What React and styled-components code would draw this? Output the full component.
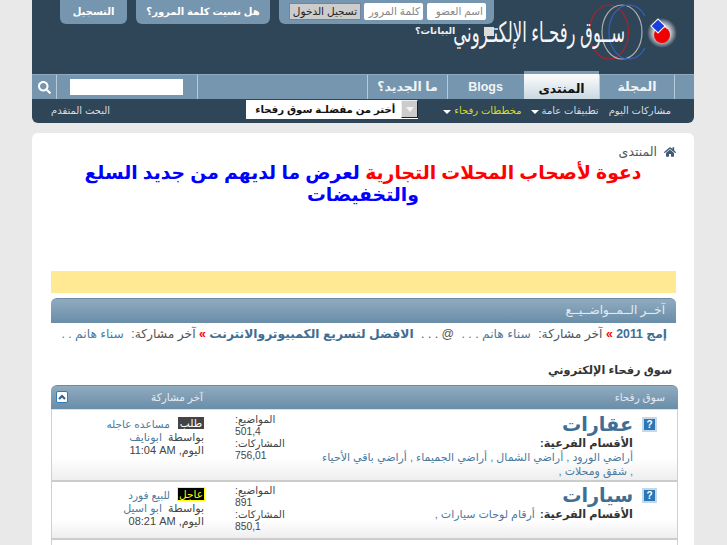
import React from 'react';
import styled, { createGlobalStyle } from 'styled-components';
import { FaHome, FaSearch } from 'react-icons/fa';

const Global = createGlobalStyle`
  html, body { margin: 0; padding: 0; height: 545px; overflow: hidden; background: #e9e9e9; }
  body { font-family: "Liberation Sans", "DejaVu Sans", sans-serif; font-size: 12px; color: #3e3e3e; direction: rtl; }
  * { box-sizing: border-box; }
`;

const Page = styled.div`
  width: 662px;
  margin-right: 33px;
  position: relative;
`;
const Header = styled.header`
  position: relative;
  height: 123px;
  background: #2f4558;
  border-radius: 0 0 6px 6px;
  overflow: hidden;
`;
const TopRow = styled.div`
  height: 74px;
  padding-right: 200px;
  display: flex;
  align-items: flex-start;
`;
const LoginPanel = styled.div`
  width: 215px;
  height: 24px;
  background: #7596ae;
  border-radius: 0 0 6px 6px;
  display: flex;
  align-items: flex-start;
  gap: 4px;
  padding: 3px 8px 0 0;
`;
const LoginField = styled.div`
  width: 59px;
  height: 17px;
  background: #fff;
  border-radius: 2px;
  color: #888;
  font-size: 10.5px;
  line-height: 17px;
  padding-right: 3px;
  white-space: nowrap;
  overflow: hidden;
`;
const LoginButton = styled.div`
  width: 72px;
  height: 17px;
  margin-right: -1px;
  background: #ccc;
  border: 1px solid #6d86a8;
  color: #222;
  font-size: 10.5px;
  line-height: 14px;
  text-align: center;
  white-space: nowrap;
`;
const TopLink = styled.a`
  width: ${p => p.$w}px;
  height: 24px;
  margin-right: ${p => p.$gap}px;
  background: #7596ae;
  border-radius: 0 0 6px 6px;
  color: #fff;
  font-weight: bold;
  font-size: 10px;
  line-height: 24px;
  text-align: center;
  white-space: nowrap;
`;
const Logo = styled.div`
  position: absolute;
  left: 382px;
  top: 0;
  width: 270px;
  height: 60px;
`;
const LogoArt = styled.svg`
  position: absolute;
  inset: 0;
`;
const LogoName = styled.div`
  position: absolute;
  right: 59px;
  top: 15px;
  color: #f6f6f6;
  font-size: 28px;
  line-height: 36px;
  white-space: nowrap;
  transform: scaleX(.59);
  transform-origin: right center;
`;
const LogoDot = styled.i`
  position: absolute;
  left: 70px;
  top: 27px;
  width: 10px;
  height: 9px;
  background: #dcdcdc;
`;
const ForgotNote = styled.div`
  position: absolute;
  left: 1px;
  top: 24px;
  color: #eee;
  font-size: 9.5px;
  font-weight: bold;
  line-height: 14px;
  white-space: nowrap;
`;
const TabBar = styled.nav`
  height: 25px;
  background: #7596ae;
  border-top: 1px solid #8eaabf;
  display: flex;
  padding-right: 19px;
  position: relative;
`;
const Tab = styled.a`
  width: ${p => p.$w}px;
  height: 24px;
  border-left: 1px solid #b7cad8;
  border-right: ${p => p.$first ? '1px solid #b7cad8' : 'none'};
  color: #f0f4f7;
  font-weight: bold;
  font-size: 12.5px;
  line-height: 24px;
  text-align: center;
  white-space: nowrap;
`;
const ActiveTab = styled(Tab)`
  height: 28px;
  margin-top: -4px;
  padding-top: 3px;
  background: linear-gradient(#f6f8f9 15%, #c9d8e1);
  border-top: 3px solid #7d9db5;
  box-shadow: inset 0 1px 0 #fff;
  color: #111;
  line-height: 24px;
  border-left: none;
  margin-left: 1px;
`;
const SearchCell = styled.div`
  margin-right: auto;
  display: flex;
  height: 24px;
`;
const SearchField = styled.div`
  width: 142px;
  height: 24px;
  border-left: 1px solid #b7cad8;
  border-right: 1px solid #b7cad8;
  padding: 4px 14px 0 14px;
`;
const SearchInput = styled.div`
  width: 113px;
  height: 16px;
  background: #fff;
`;
const SearchBtn = styled.div`
  width: 24px;
  height: 24px;
  color: #fff;
  font-size: 13px;
  display: flex;
  align-items: center;
  justify-content: center;
`;
const SubNav = styled.div`
  height: 24px;
  display: flex;
  align-items: flex-start;
  padding: 0 23px 0 19px;
`;
const SubLink = styled.a`
  color: ${p => p.$c || '#d7dee4'};
  font-size: 10px;
  line-height: 23px;
  margin-left: ${p => p.$gap || 0}px;
  white-space: nowrap;
  display: inline-flex;
  align-items: center;
  gap: 3px;
`;
const Caret = styled.i`
  width: 0;
  height: 0;
  margin-top: 2px;
  border: 4px solid transparent;
  border-bottom: none;
  border-top: 4px solid #fff;
`;
const Jump = styled.div`
  width: 172px;
  height: 19px;
  margin-top: 1px;
  background: #fff;
  color: #111;
  font-weight: bold;
  font-size: 10.2px;
  line-height: 19px;
  display: flex;
  white-space: nowrap;
  overflow: hidden;
`;
const JumpText = styled.span`
  flex: 1;
  margin-right: 6px;
`;
const JumpArrow = styled.i`
  order: -1;
  width: 17px;
  height: 18px;
  background: #ccc;
  border: 1px solid;
  border-color: #eee #222 #222 #eee;
  display: flex;
  align-items: center;
  justify-content: center;
  &::after { content: ''; border: 4px solid transparent; border-bottom: none; border-top: 5px solid #f4f4f4; }
`;
const Advanced = styled(SubLink)`
  margin-right: auto;
  color: #d7dee4;
`;
const Body = styled.main`
  margin-top: 10px;
  background: #fff;
  border-radius: 6px 6px 0 0;
  padding: 11px 18px 0 18px;
  height: 500px;
`;
const Crumb = styled.div`
  display: flex;
  align-items: center;
  gap: 7px;
  color: #555;
  font-size: 12.5px;
  height: 15px;
  svg { color: #3e5a75; font-size: 12px; }
`;
const Headline = styled.h2`
  margin: 3px 0 0 0;
  text-align: center;
  color: #0000ff;
  font-size: 18.8px;
  font-weight: bold;
  line-height: 22px;
  padding: 0 16px;
`;
const Red = styled.span` color: #ff0000; `;
const Banner = styled.div`
  margin: 65px 0 0 1px;
  height: 22px;
  background: #ffe992;
`;
const LatestHead = styled.div`
  margin: 5px 0 0 1px;
  height: 25px;
  border-radius: 6px 6px 0 0;
  border-top: 1px solid #6b8ba6;
  background: linear-gradient(#8fabbf, #6a8da8);
  color: #e4ebf0;
  font-size: 12px;
  line-height: 22px;
  padding-right: 11px;
`;
const Ticker = styled.div`
  margin-left: 11px;
  height: 22px;
  padding-right: 9px;
  line-height: 23px;
  font-size: 12.3px;
  white-space: nowrap;
  overflow: hidden;
  color: #555;
`;
const Topic = styled.b`
  color: #3e6e93;
  margin-right: ${p => p.$gap || 0}px;
`;
const Who = styled.span` color: #4a7a9e; margin: 0 4px; `;
const Arrow = styled.span` color: #f00; font-weight: bold; `;
const ForumTitle = styled.h3`
  margin: 18px 0 0 0;
  padding-right: 4px;
  height: 22px;
  font-size: 11.3px;
  line-height: 14px;
  color: #333;
`;
const ForumHead = styled.div`
  height: 24px;
  border-radius: 6px 6px 0 0;
  border-top: 1px solid #6b8ba6;
  background: linear-gradient(#8fabbf, #6a8da8);
  color: #e4ebf0;
  font-size: 10.5px;
  display: flex;
  align-items: center;
  padding: 0 13px 2px 5px;
  margin-right: -2px;
  width: 627px;
`;
const LastHead = styled.span`
  margin-right: auto;
  margin-left: 83px;
`;
const Collapse = styled.i`
  width: 12px;
  height: 12px;
  background: #fff;
  border: 1px solid #2f7cb8;
  border-radius: 2px;
  color: #2c5f8a;
  display: flex;
  align-items: center;
  justify-content: center;
`;
const Row = styled.div`
  width: 627px;
  margin-right: -2px;
  height: ${p => p.$h}px;
  border: 1px solid #d0d0d0;
  border-top: ${p => p.$first ? '1px solid #d8e2ea' : 'none'};
  border-bottom: 2px solid #ccc;
  background: linear-gradient(#fff 68%, #eee);
  display: grid;
  grid-template-columns: 395px 67px 1fr;
  padding-top: ${p => p.$first ? 5 : 4}px;
`;
const ForumCell = styled.div`
  display: flex;
  align-items: flex-start;
  gap: 9px;
  padding: 0 20px 0 38px;
`;
const HelpIcon = styled.i`
  flex: none;
  width: 15px;
  height: 15px;
  margin-top: 2px;
  background: #2a77b8;
  border: 2px solid #c5d8e8;
  color: #fff;
  font: bold 10px/11px "Liberation Sans", sans-serif;
  text-align: center;
`;
const ForumName = styled.div`
  color: #3e6e93;
  font-size: 19.2px;
  font-weight: bold;
  line-height: 20px;
  height: 21px;
`;
const Subs = styled.div`
  font-size: 11px;
  line-height: 14px;
  color: #4a7a9e;
`;
const SubLabel = styled.b`
  color: #333;
  font-size: 11.3px;
  margin-left: 2px;
`;
const Stats = styled.div`
  font-size: 10.3px;
  line-height: 12px;
  color: #444;
  margin-top: -1px;
`;
const StatLine = styled.div`
  direction: ltr;
  text-align: left;
  width: 47px;
  white-space: nowrap;
  height: 12px;
`;
const Last = styled.div`
  font-size: 11px;
  line-height: 12px;
  color: #444;
  padding-top: 2px;
  margin-right: 11px;
  white-space: nowrap;
`;
const LastTop = styled.div`
  display: flex;
  align-items: flex-start;
  gap: 8px;
  height: 14px;
  white-space: nowrap;
`;
const Tag = styled.span`
  background: ${p => p.$alert ? '#000' : '#444'};
  color: ${p => p.$alert ? '#ffff00' : '#fff'};
  outline: ${p => p.$alert ? '1px solid #ffff00' : 'none'};
  font-size: 10.5px;
  line-height: 12px;
  padding: 0 ${p => p.$alert ? 1 : 2}px;
  height: 12px;
`;
const TopLinkText = styled.a`
  color: #4a7a9e;
  font-size: 10.5px;
  line-height: 14px;
`;
const Lnk = styled.a` color: #4a7a9e; `;
const LastLine = styled.div`
  line-height: 13px;
`;
const Nums = styled.span` direction: ltr; unicode-bidi: isolate; `;

export default function App() {
  return (
    <Page>
      <Global />
      <Header>
        <TopRow>
          <LoginPanel>
            <LoginField>اسم العضو</LoginField>
            <LoginField>كلمة المرور</LoginField>
            <LoginButton>تسجيل الدخول</LoginButton>
          </LoginPanel>
          <TopLink $w={134} $gap={9}>هل نسيت كلمة المرور؟</TopLink>
          <TopLink $w={67} $gap={9}>التسجيل</TopLink>
        </TopRow>
        <Logo>
          <LogoArt width="270" height="60" viewBox="0 0 270 60">
            <defs>
              <radialGradient id="glow">
                <stop offset="45%" stopColor="#e8e8e8" />
                <stop offset="100%" stopColor="#2f4558" />
              </radialGradient>
            </defs>
            <ellipse cx="195" cy="32" rx="19.5" ry="27" fill="none" stroke="#a8232f" strokeWidth="1.2" />
            <ellipse cx="208" cy="32" rx="20" ry="27" fill="none" stroke="#a9b0b6" strokeWidth="1.2" />
            <path d="M231 16 A20 27 0 1 0 231 48" fill="none" stroke="#3560b8" strokeWidth="1.2" />
            <circle cx="248" cy="33" r="15" fill="url(#glow)" />
            <circle cx="248" cy="35" r="8" fill="#f00000" />
            <rect x="239" y="21" width="10" height="10" fill="#1a3fe0" stroke="#fff" transform="rotate(45 244 26)" />
          </LogoArt>
          <LogoName>ســوق رفحـاء الإلكتـروني</LogoName>
          <LogoDot />
          <ForgotNote>البيانات؟</ForgotNote>
        </Logo>
        <TabBar>
          <Tab $w={76} $first>المجلة</Tab>
          <ActiveTab $w={75}>المنتدى</ActiveTab>
          <Tab $w={76}>Blogs</Tab>
          <Tab $w={80}>ما الجديد؟</Tab>
          <SearchCell>
            <SearchField><SearchInput /></SearchField>
            <SearchBtn><FaSearch /></SearchBtn>
          </SearchCell>
        </TabBar>
        <SubNav>
          <SubLink $gap={10}>مشاركات اليوم</SubLink>
          <SubLink $gap={9}>تطبيقات عامة <Caret /></SubLink>
          <SubLink $c="#d8dc2c" $gap={25}>مخططات رفحاء <Caret /></SubLink>
          <Jump>
            <JumpText>أختر من مفضلـة سوق رفحاء</JumpText>
            <JumpArrow />
          </Jump>
          <Advanced>البحث المتقدم</Advanced>
        </SubNav>
      </Header>
      <Body>
        <Crumb><FaHome />المنتدى</Crumb>
        <Headline><Red>دعوة لأصحاب المحلات التجارية</Red> لعرض ما لديهم من جديد السلع والتخفيضات</Headline>
        <Banner />
        <LatestHead>آخــر الــمــواضــيــع</LatestHead>
        <Ticker>
          <Topic>إمج 2011</Topic> <Arrow>»</Arrow> آخر مشاركة: <Who>سناء هانم . . .</Who> @ . . . <Topic $gap={4}>الافضل لتسريع الكمبيوتروالانترنت</Topic> <Arrow>»</Arrow> آخر مشاركة: <Who>سناء هانم . . .</Who>
        </Ticker>
        <ForumTitle>سوق رفحاء الإلكتروني</ForumTitle>
        <ForumHead>
          <span>سوق رفحاء</span>
          <LastHead>آخر مشاركة</LastHead>
          <Collapse>
            <svg width="8" height="6" viewBox="0 0 8 6"><path d="M1 5 L4 2 L7 5" fill="none" stroke="currentColor" strokeWidth="2" /></svg>
          </Collapse>
        </ForumHead>
        <Row $h={73} $first>
          <ForumCell>
            <HelpIcon>?</HelpIcon>
            <div>
              <ForumName>عقارات</ForumName>
              <Subs>
                <SubLabel>الأقسام الفرعية:</SubLabel><br />
                أراضي الورود , أراضي الشمال , أراضي الجميماء , أراضي باقي الأحياء , شقق ومحلات ,
              </Subs>
            </div>
          </ForumCell>
          <Stats>
            <StatLine>:المواضيع</StatLine>
            <StatLine>501,4</StatLine>
            <StatLine>:المشاركات</StatLine>
            <StatLine>756,01</StatLine>
          </Stats>
          <Last>
            <LastTop><Tag>طلب</Tag><TopLinkText>مساعده عاجله</TopLinkText></LastTop>
            <LastLine>بواسطة <Lnk>&nbsp;ابونايف</Lnk></LastLine>
            <LastLine>اليوم, <Nums>11:04 AM</Nums></LastLine>
          </Last>
        </Row>
        <Row $h={58}>
          <ForumCell>
            <HelpIcon>?</HelpIcon>
            <div>
              <ForumName>سيارات</ForumName>
              <Subs><SubLabel>الأقسام الفرعية:</SubLabel>&nbsp;أرقام لوحات سيارات ,</Subs>
            </div>
          </ForumCell>
          <Stats>
            <StatLine>:المواضيع</StatLine>
            <StatLine>891</StatLine>
            <StatLine>:المشاركات</StatLine>
            <StatLine>850,1</StatLine>
          </Stats>
          <Last>
            <LastTop><Tag $alert>عاجل</Tag><TopLinkText>للبيع فورد</TopLinkText></LastTop>
            <LastLine>بواسطة <Lnk>&nbsp;ابو اسيل</Lnk></LastLine>
            <LastLine>اليوم, <Nums>08:21 AM</Nums></LastLine>
          </Last>
        </Row>
        <Row $h={40}>
          <ForumCell><HelpIcon>?</HelpIcon></ForumCell>
        </Row>
      </Body>
    </Page>
  );
}
